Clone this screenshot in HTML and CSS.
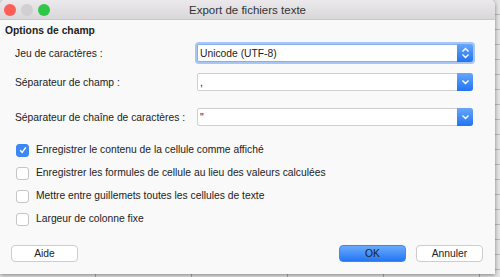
FILE: index.html
```html
<!DOCTYPE html>
<html lang="fr">
<head>
    <meta charset="UTF-8">
    <title>Export de fichiers texte</title>
    <link rel="stylesheet" href="styles.css">
</head>
<body>
    <div class="dialog">
        <div class="titlebar">
            <div class="lights">
                <span class="light red"></span>
                <span class="light grey"></span>
                <span class="light green"></span>
            </div>
            <div class="title">Export de fichiers texte</div>
        </div>
        <div class="content">
            <div class="heading">Options de champ</div>
            <div class="field first">
                <label>Jeu de caractères :</label>
                <div class="select focused">
                    <span class="value">Unicode (UTF-8)</span>
                    <span class="arrow">
                        <svg width="9" height="12" viewBox="0 0 9 12"><path d="M1.5 4.5 L4.5 1.5 L7.5 4.5 M1.5 7.5 L4.5 10.5 L7.5 7.5" fill="none" stroke="#fff" stroke-width="1.4"/></svg>
                    </span>
                </div>
            </div>
            <div class="field second">
                <label>Séparateur de champ :</label>
                <div class="select">
                    <span class="value">,</span>
                    <span class="arrow">
                        <svg width="9" height="6" viewBox="0 0 9 6"><path d="M1.5 1.5 L4.5 4.5 L7.5 1.5" fill="none" stroke="#fff" stroke-width="1.4"/></svg>
                    </span>
                </div>
            </div>
            <div class="field third">
                <label>Séparateur de chaîne de caractères :</label>
                <div class="select">
                    <span class="value">"</span>
                    <span class="arrow">
                        <svg width="9" height="6" viewBox="0 0 9 6"><path d="M1.5 1.5 L4.5 4.5 L7.5 1.5" fill="none" stroke="#fff" stroke-width="1.4"/></svg>
                    </span>
                </div>
            </div>
            <div class="checks">
                <div class="check">
                    <span class="box checked">
                        <svg width="10" height="10" viewBox="0 0 10 10"><path d="M2.2 5.2 L4.2 7.4 L7.8 2.4" fill="none" stroke="#fff" stroke-width="1.5"/></svg>
                    </span>
                    Enregistrer le contenu de la cellule comme affiché
                </div>
                <div class="check"><span class="box"></span>Enregistrer les formules de cellule au lieu des valeurs calculées</div>
                <div class="check"><span class="box"></span>Mettre entre guillemets toutes les cellules de texte</div>
                <div class="check"><span class="box"></span>Largeur de colonne fixe</div>
            </div>
            <div class="buttons">
                <button class="btn">Aide</button>
                <div class="right">
                    <button class="btn primary">OK</button>
                    <button class="btn">Annuler</button>
                </div>
            </div>
        </div>
    </div>
</body>
</html>
```
FILE: styles.css
```css
body {
    margin: 0;
    width: 500px;
    height: 277px;
    overflow: hidden;
    font-family: "Liberation Sans", Arial, sans-serif;
    color: #222;
    background-color: #e4e4e4;
    background-image:
        repeating-linear-gradient(to bottom, transparent 0, transparent 14px, #b9b9b9 14px, #b9b9b9 15px),
        repeating-linear-gradient(to right, transparent 0, transparent 95px, #a8a8a8 95px, #a8a8a8 96px);
}

.dialog {
    width: 495px;
    height: 274px;
    background: #f9f9f9;
    border-radius: 5px 5px 0 0;
    box-shadow: 0 1px 4px rgba(0, 0, 0, 0.45);
    display: flex;
    flex-direction: column;
}

.titlebar {
    height: 19px;
    border-radius: 5px 5px 0 0;
    background: linear-gradient(#ebe9eb, #d9d7d9);
    border-bottom: 1px solid #c9c7c9;
    display: flex;
    align-items: center;
    position: relative;
}

.lights {
    display: flex;
    gap: 5px;
    padding-left: 4px;
}

.light {
    width: 12px;
    height: 12px;
    border-radius: 50%;
}

.red { background: #fc5f57; }
.grey { background: #d1cfd1; }
.green { background: #30c748; }

.title {
    position: absolute;
    left: 0;
    right: 0;
    text-align: center;
    font-size: 11.5px;
    color: #333;
}

.content {
    flex: 1;
    padding: 4px 0 0 5px;
    display: flex;
    flex-direction: column;
}

.heading {
    font-size: 10.3px;
    font-weight: bold;
    line-height: 14px;
}

.field {
    display: flex;
    align-items: center;
    padding-left: 10px;
    font-size: 10.3px;
}

.field label {
    width: 182px;
}

.first { margin-top: 6px; }
.second { margin-top: 11px; }
.third { margin-top: 17px; }

.select {
    width: 274px;
    height: 16px;
    background: #fff;
    border: 1px solid #cfcfcf;
    border-radius: 2px;
    display: flex;
    align-items: center;
    justify-content: space-between;
}

.select.focused {
    border-color: #86aef0;
    box-shadow: 0 0 0 2px #a7c6f5;
}

.value {
    padding-left: 2px;
    font-size: 10.3px;
}

.arrow {
    width: 16px;
    height: 18px;
    margin-right: -1px;
    border-radius: 0 3px 3px 0;
    background: linear-gradient(#67a7fb, #2273f2);
    display: flex;
    align-items: center;
    justify-content: center;
}

.checks {
    margin-top: 17px;
    padding-left: 11px;
    display: flex;
    flex-direction: column;
    gap: 9px;
}

.check {
    display: flex;
    align-items: center;
    gap: 7px;
    font-size: 10.3px;
    line-height: 14px;
}

.box {
    width: 11px;
    height: 11px;
    border: 1px solid #c5c5c5;
    border-radius: 3px;
    background: #fff;
    display: flex;
    align-items: center;
    justify-content: center;
}

.box.checked {
    border-color: #3c87f5;
    background: #3c87f5;
}

.buttons {
    margin-top: 19px;
    padding-left: 6px;
    display: flex;
    justify-content: space-between;
    width: 472px;
}

.right {
    display: flex;
    gap: 10px;
}

.btn {
    width: 67px;
    height: 17px;
    padding: 0;
    font-family: "Liberation Sans", Arial, sans-serif;
    font-size: 10.3px;
    color: #222;
    background: #fff;
    border: 1px solid #cdcdcd;
    border-radius: 4px;
}

.btn.primary {
    background: linear-gradient(#69abfd, #2476f4);
    border-color: #3f86ef;
}
```
